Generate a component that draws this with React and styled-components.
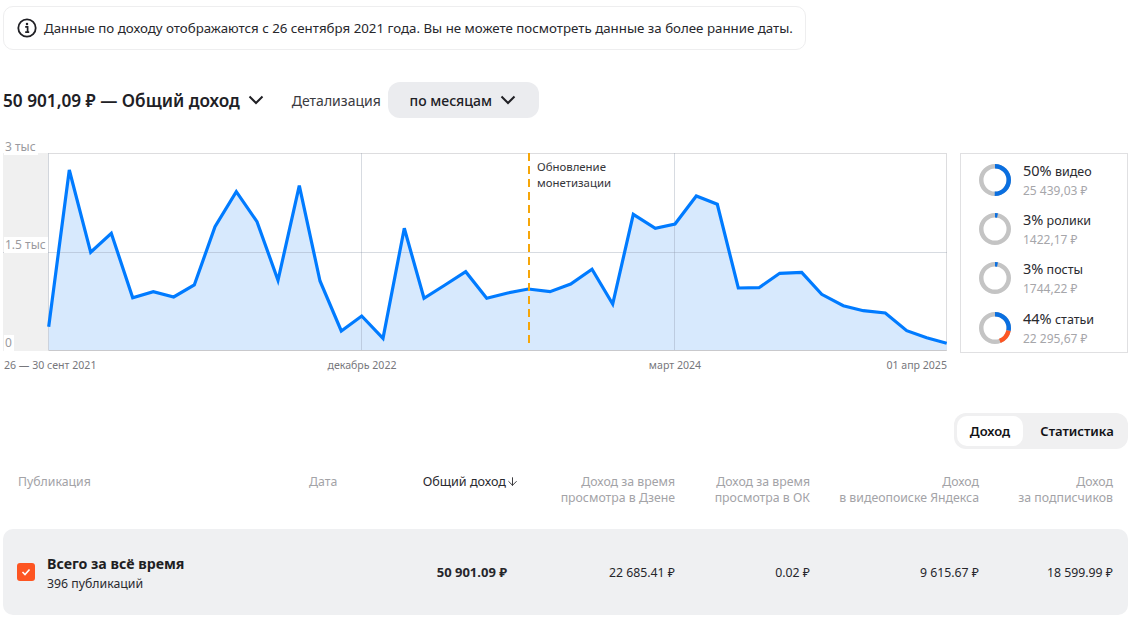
import React from 'react';
import styled, { createGlobalStyle } from 'styled-components';
import { ArrowDown } from 'lucide-react';

const GlobalStyle = createGlobalStyle`
  * { box-sizing: border-box; }
  html, body { margin: 0; padding: 0; background: #fff; }
  body {
    font-family: "Noto Sans", "Open Sans", sans-serif;
    color: #1f1f24;
    overflow: hidden;
  }
`;

const Page = styled.div`
  width: 1141px;
  height: 618px;
  padding: 6px 13px 0 3px;
  display: flex;
  flex-direction: column;
`;

const Notice = styled.div`
  align-self: flex-start;
  display: flex;
  align-items: center;
  gap: 7px;
  width: 803px;
  height: 44px;
  padding: 0 0 0 13px;
  border: 1px solid #eeeeef;
  border-radius: 10px;
  font-size: 13.3px;
  color: #27272c;
  white-space: nowrap;
`;

const Header = styled.div`
  display: flex;
  align-items: center;
  height: 36px;
  margin-top: 32px;
`;

const Title = styled.div`
  display: flex;
  align-items: center;
  gap: 7px;
  font-size: 17.2px;
  font-weight: 600;
  color: #202025;
  white-space: nowrap;
`;

const DetailLabel = styled.div`
  margin-left: 27px;
  font-size: 14px;
  color: #3a3a40;
`;

const PeriodButton = styled.button`
  display: flex;
  align-items: center;
  justify-content: center;
  gap: 7px;
  width: 151px;
  height: 36px;
  margin-left: 7px;
  border: none;
  border-radius: 12px;
  background: #ebecef;
  font-family: inherit;
  font-size: 14px;
  font-weight: 500;
  color: #202025;
`;

const ChartRow = styled.div`
  display: flex;
  align-items: flex-start;
  gap: 13px;
  margin-top: 35px;
`;

const ChartColumn = styled.div`
  width: 944px;
`;

const Plot = styled.div`
  position: relative;
  width: 944px;
  height: 198px;
  border: 1px solid #dddddf;
  border-bottom-color: #c9c9cc;
`;

const PlotSvg = styled.svg`
  position: absolute;
  left: -1px;
  top: -1px;
  display: block;
`;

const YLabel = styled.span`
  position: absolute;
  left: 0;
  top: ${(p) => p.$top}px;
  padding: 0 2px 0 1px;
  background: #fff;
  font-size: 12px;
  line-height: 16px;
  color: #9a9a9e;
`;

const Annotation = styled.div`
  position: absolute;
  left: 533px;
  top: 5px;
  font-size: 11.4px;
  line-height: 16px;
  color: #35353a;
`;

const XAxis = styled.div`
  position: relative;
  height: 22px;
`;

const XLabel = styled.span`
  position: absolute;
  top: 7px;
  font-size: 10.6px;
  line-height: 15px;
  color: #77777c;
  white-space: nowrap;
  ${(p) => p.$align === 'left' && `left: ${p.$x}px;`}
  ${(p) => p.$align === 'center' && `left: ${p.$x}px; transform: translateX(-50%);`}
  ${(p) => p.$align === 'right' && `right: ${p.$x}px;`}
`;

const SharePanel = styled.div`
  display: flex;
  flex-direction: column;
  gap: 9.2px;
  width: 168px;
  height: 200px;
  padding: 6px 0 0 18px;
  border: 1px solid #e0e0e2;
`;

const ShareItem = styled.div`
  display: flex;
  align-items: center;
  gap: 12px;
  height: 40px;
`;

const ShareText = styled.div`
  display: flex;
  flex-direction: column;
  gap: 2px;
`;

const ShareTitle = styled.div`
  font-size: 12.5px;
  line-height: 18px;
  color: #2a2a2f;
  white-space: nowrap;

  b {
    font-size: 14.5px;
    font-weight: 400;
  }
`;

const ShareAmount = styled.div`
  font-size: 12px;
  line-height: 16px;
  color: #a6a6aa;
  white-space: nowrap;
`;

const TabsRow = styled.div`
  display: flex;
  justify-content: flex-end;
  margin-top: 40px;
`;

const Tabs = styled.div`
  display: flex;
  align-items: center;
  gap: 3px;
  width: 174px;
  height: 36px;
  padding: 0 0 0 3px;
  border-radius: 12px;
  background: #f0f0f1;
`;

const Tab = styled.div`
  display: flex;
  align-items: center;
  justify-content: center;
  width: ${(p) => (p.$active ? '66px' : '102px')};
  height: 30px;
  border-radius: 10px;
  background: ${(p) => (p.$active ? '#fff' : 'transparent')};
  font-size: 13px;
  font-weight: 600;
  color: #121216;
`;

const columns = '291px 91px 118px 157px 135px 169px 134px';

const TableHead = styled.div`
  display: grid;
  grid-template-columns: ${columns};
  padding: 0 15px;
  margin-top: 25px;
  height: 32px;
`;

const HeadCell = styled.div`
  display: flex;
  justify-content: ${(p) => (p.$right ? 'flex-end' : 'flex-start')};
  align-items: flex-start;
  font-size: ${(p) => (p.$active ? '12.6px' : '12.3px')};
  line-height: 16px;
  text-align: ${(p) => (p.$right ? 'right' : 'left')};
  color: ${(p) => (p.$active ? '#2a2a2f' : '#a3a3a7')};
  white-space: pre-line;

  svg {
    margin: 1px -1px 0 0;
    flex: none;
  }
`;

const TotalRow = styled.div`
  display: grid;
  grid-template-columns: ${columns};
  align-items: center;
  height: 86px;
  margin-top: 23px;
  padding: 0 15px;
  border-radius: 10px;
  background: #eff0f2;
`;

const PublicationCell = styled.div`
  display: flex;
  align-items: center;
  gap: 12px;
  margin-left: -1px;
`;

const Checkbox = styled.div`
  display: flex;
  align-items: center;
  justify-content: center;
  width: 18px;
  height: 18px;
  border-radius: 3px;
  background: #fd5522;
`;

const RowTitle = styled.div`
  margin-top: 3px;
  font-size: 14.2px;
  line-height: 20px;
  font-weight: 700;
  color: #1e1e23;
`;

const RowSub = styled.div`
  margin-top: 1px;
  font-size: 12.3px;
  line-height: 18px;
  color: #2a2a2f;
`;

const Amount = styled.div`
  grid-column: ${(p) => p.$col};
  padding-right: ${(p) => p.$inset || 0}px;
  text-align: right;
  font-size: ${(p) => (p.$bold ? '13px' : '12.3px')};
  font-weight: ${(p) => (p.$bold ? 700 : 400)};
  color: #26262b;
  white-space: nowrap;
`;

const points = [
  [48.7, 326.7], [69.3, 170], [90.7, 252.3], [111.3, 233.3], [132.7, 297.7], [153.3, 291.7],
  [173.7, 297], [194.3, 285], [215, 226.7], [236.3, 191.7], [257, 221.7], [278, 280.3],
  [299.3, 185.7], [320, 281], [341.3, 331], [361.7, 316], [383, 338.3], [404.3, 228.3],
  [424, 298.3], [445, 285], [465.7, 271.7], [486.7, 298.3], [507.7, 293], [528.3, 289],
  [550, 291.7], [570.7, 284], [592, 269.3], [612.7, 304], [633.3, 214.3], [655.3, 228.3],
  [675, 224], [696.3, 196], [717.3, 204.3], [738.3, 288], [759, 287.7], [779.7, 273.3],
  [801.7, 272.3], [821.7, 294.3], [843.3, 305.7], [863.3, 310.7], [885.3, 313], [906.7, 330.7],
  [926.7, 337.7], [946.7, 343.3],
];

const linePath = points.map(([x, y]) => `${x},${y}`).join(' ');
const areaPath = `48.7,350 ${linePath} 946.7,350`;

function RevenueChart() {
  return (
    <PlotSvg width="944" height="198" viewBox="3 153 944 198">
      <rect x="3" y="153" width="45.5" height="198" fill="#f0f0f0" />
      <polygon points={areaPath} fill="#d7e9fd" />
      <g stroke="#8c97a8" strokeOpacity="0.35" strokeWidth="1">
        <line x1="3" y1="252.5" x2="947" y2="252.5" />
        <line x1="48.5" y1="153" x2="48.5" y2="350" />
        <line x1="361.5" y1="153" x2="361.5" y2="350" />
        <line x1="674.5" y1="153" x2="674.5" y2="350" />
      </g>
      <polyline points={linePath} fill="none" stroke="#007bff" strokeWidth="3.2" strokeLinejoin="miter" />
      <line x1="529" y1="153" x2="529" y2="345" stroke="#f6a609" strokeWidth="2" strokeDasharray="8 5" />
    </PlotSvg>
  );
}

function Donut({ segments }) {
  const r = 13.75;
  const c = 2 * Math.PI * r;
  let offset = 0;
  return (
    <svg width="32" height="32" viewBox="0 0 32 32">
      <circle cx="16" cy="16" r={r} fill="none" stroke="#c4c4c4" strokeWidth="4.5" />
      {segments.map(([share, color]) => {
        const dash = (
          <circle
            key={color}
            cx="16"
            cy="16"
            r={r}
            fill="none"
            stroke={color}
            strokeWidth="4.5"
            strokeDasharray={`${c * share} ${c}`}
            strokeDashoffset={-c * offset}
            transform="rotate(-90 16 16)"
          />
        );
        offset += share;
        return dash;
      })}
    </svg>
  );
}

const shares = [
  { pct: '50%', name: 'видео', amount: '25 439,03 ₽', segments: [[0.5, '#0a6fe0']] },
  { pct: '3%', name: 'ролики', amount: '1422,17 ₽', segments: [[0.03, '#0a6fe0']] },
  { pct: '3%', name: 'посты', amount: '1744,22 ₽', segments: [[0.03, '#0a6fe0']] },
  { pct: '44%', name: 'статьи', amount: '22 295,67 ₽', segments: [[0.28, '#0a6fe0'], [0.16, '#fd5522']] },
];

const Chevron = () => (
  <svg width="18" height="18" viewBox="0 0 18 18" fill="none">
    <path d="M2.5 5.5 9 12l6.5-6.5" stroke="#202025" strokeWidth="2" />
  </svg>
);

const InfoIcon = () => (
  <svg width="20" height="20" viewBox="0 0 20 20" fill="none">
    <circle cx="10" cy="10" r="8.7" stroke="#202025" strokeWidth="1.8" />
    <circle cx="10" cy="6" r="1.25" fill="#202025" />
    <path d="M8.2 8.9H10.6V13.6M8.2 14.2H12.2" stroke="#202025" strokeWidth="1.7" />
  </svg>
);

export default function App() {
  return (
    <>
      <GlobalStyle />
      <Page>
        <Notice>
          <InfoIcon />
          Данные по доходу отображаются с 26 сентября 2021 года. Вы не можете посмотреть данные за более ранние даты.
        </Notice>

        <Header>
          <Title>
            50 901,09 ₽ — Общий доход
            <Chevron />
          </Title>
          <DetailLabel>Детализация</DetailLabel>
          <PeriodButton>
            по месяцам
            <Chevron />
          </PeriodButton>
        </Header>

        <ChartRow>
          <ChartColumn>
            <Plot>
              <RevenueChart />
              <YLabel $top={-15}>3 тыс</YLabel>
              <YLabel $top={83}>1.5 тыс</YLabel>
              <YLabel $top={181}>0</YLabel>
              <Annotation>
                Обновление
                <br />
                монетизации
              </Annotation>
            </Plot>
            <XAxis>
              <XLabel $align="left" $x={1}>26 — 30 сент 2021</XLabel>
              <XLabel $align="center" $x={359}>декабрь 2022</XLabel>
              <XLabel $align="center" $x={672}>март 2024</XLabel>
              <XLabel $align="right" $x={0}>01 апр 2025</XLabel>
            </XAxis>
          </ChartColumn>
          <SharePanel>
            {shares.map((s) => (
              <ShareItem key={s.name}>
                <Donut segments={s.segments} />
                <ShareText>
                  <ShareTitle>
                    <b>{s.pct}</b> {s.name}
                  </ShareTitle>
                  <ShareAmount>{s.amount}</ShareAmount>
                </ShareText>
              </ShareItem>
            ))}
          </SharePanel>
        </ChartRow>

        <TabsRow>
          <Tabs>
            <Tab $active>Доход</Tab>
            <Tab>Статистика</Tab>
          </Tabs>
        </TabsRow>

        <TableHead>
          <HeadCell>Публикация</HeadCell>
          <HeadCell>Дата</HeadCell>
          <HeadCell $right $active>
            Общий доход
            <ArrowDown size={13} strokeWidth={1.7} />
          </HeadCell>
          <HeadCell $right>{'Доход за время\nпросмотра в Дзене'}</HeadCell>
          <HeadCell $right>{'Доход за время\nпросмотра в ОК'}</HeadCell>
          <HeadCell $right>{'Доход\nв видеопоиске Яндекса'}</HeadCell>
          <HeadCell $right>{'Доход\nза подписчиков'}</HeadCell>
        </TableHead>

        <TotalRow>
          <PublicationCell>
            <Checkbox>
              <svg width="12" height="12" viewBox="0 0 12 12" fill="none">
                <path d="M2.5 6 5 8.5l4.5-5" stroke="#fff" strokeWidth="1.6" />
              </svg>
            </Checkbox>
            <div>
              <RowTitle>Всего за всё время</RowTitle>
              <RowSub>396 публикаций</RowSub>
            </div>
          </PublicationCell>
          <Amount $col={3} $bold $inset={11}>50 901.09 ₽</Amount>
          <Amount $col={4}>22 685.41 ₽</Amount>
          <Amount $col={5}>0.02 ₽</Amount>
          <Amount $col={6}>9 615.67 ₽</Amount>
          <Amount $col={7}>18 599.99 ₽</Amount>
        </TotalRow>
      </Page>
    </>
  );
}
